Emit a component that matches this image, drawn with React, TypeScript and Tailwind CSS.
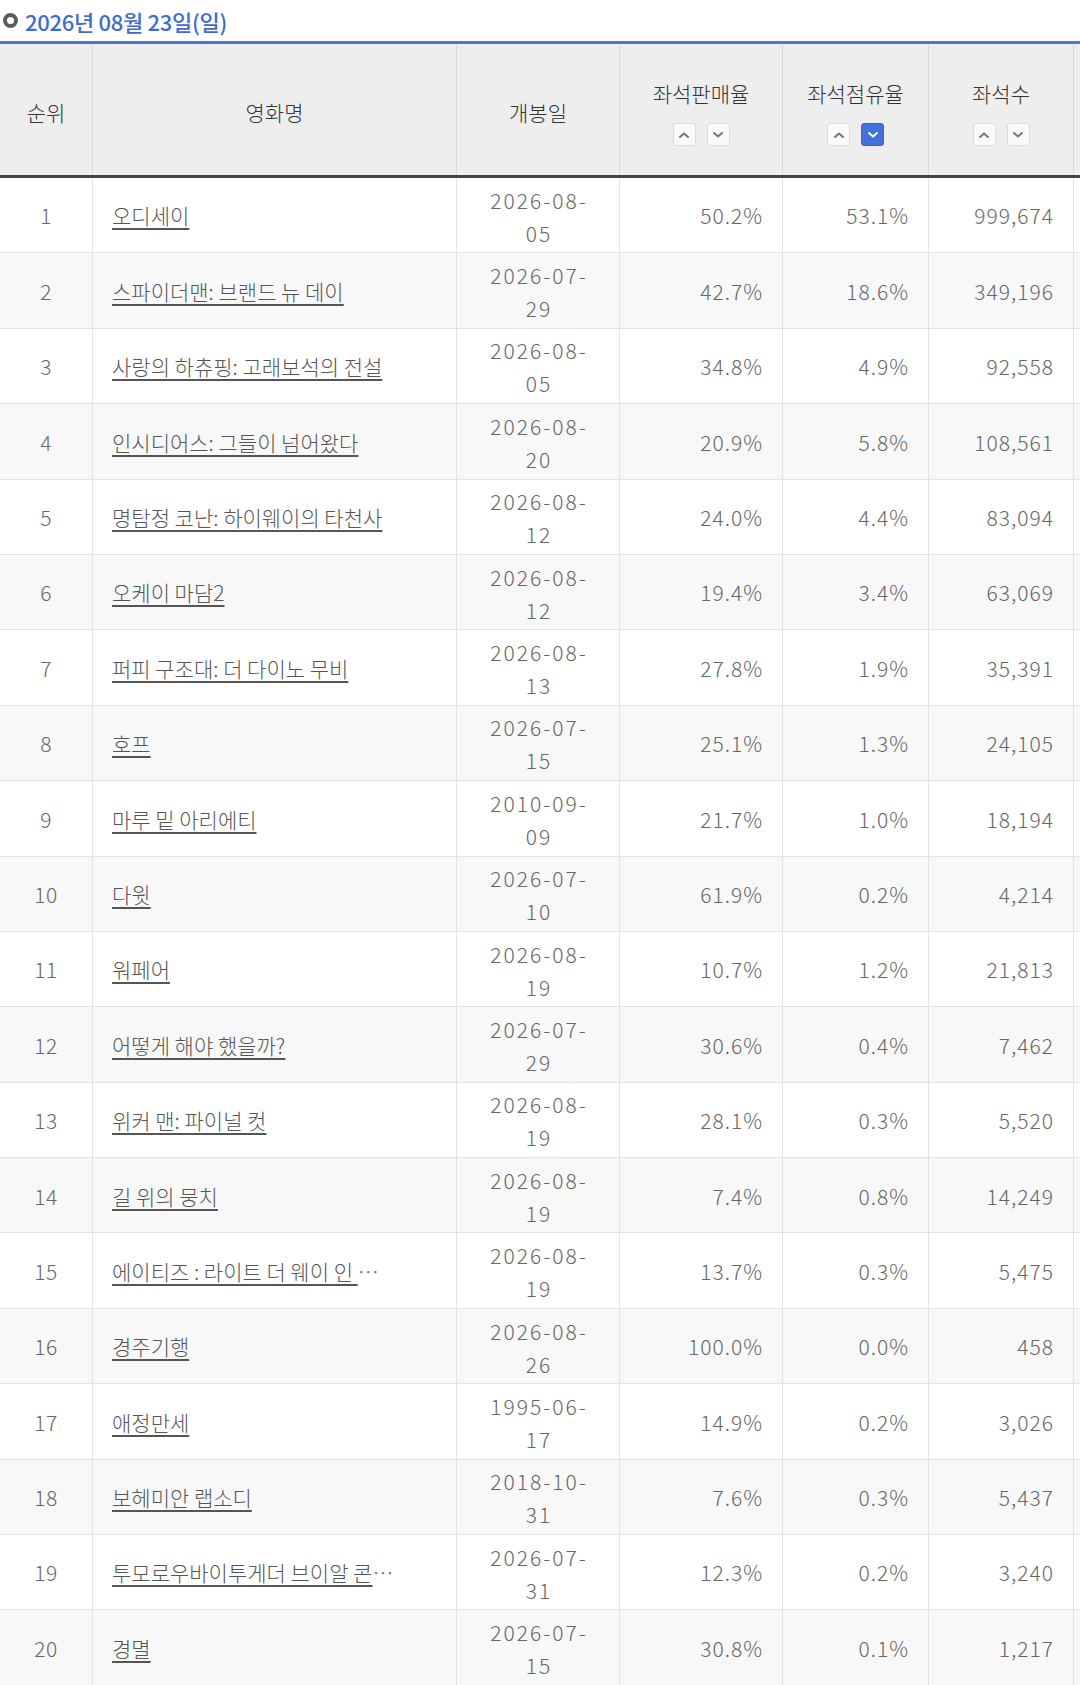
import React from "react";

type Movie = {
  rank: number;
  name: string;
  more?: string;
  date: string;
  sales: string;
  share: string;
  seats: string;
};

const MOVIES: Movie[] = [
  { rank: 1, name: "오디세이", date: "2026-08-05", sales: "50.2%", share: "53.1%", seats: "999,674" },
  { rank: 2, name: "스파이더맨: 브랜드 뉴 데이", date: "2026-07-29", sales: "42.7%", share: "18.6%", seats: "349,196" },
  { rank: 3, name: "사랑의 하츄핑: 고래보석의 전설", date: "2026-08-05", sales: "34.8%", share: "4.9%", seats: "92,558" },
  { rank: 4, name: "인시디어스: 그들이 넘어왔다", date: "2026-08-20", sales: "20.9%", share: "5.8%", seats: "108,561" },
  { rank: 5, name: "명탐정 코난: 하이웨이의 타천사", date: "2026-08-12", sales: "24.0%", share: "4.4%", seats: "83,094" },
  { rank: 6, name: "오케이 마담2", date: "2026-08-12", sales: "19.4%", share: "3.4%", seats: "63,069" },
  { rank: 7, name: "퍼피 구조대: 더 다이노 무비", date: "2026-08-13", sales: "27.8%", share: "1.9%", seats: "35,391" },
  { rank: 8, name: "호프", date: "2026-07-15", sales: "25.1%", share: "1.3%", seats: "24,105" },
  { rank: 9, name: "마루 밑 아리에티", date: "2010-09-09", sales: "21.7%", share: "1.0%", seats: "18,194" },
  { rank: 10, name: "다윗", date: "2026-07-10", sales: "61.9%", share: "0.2%", seats: "4,214" },
  { rank: 11, name: "워페어", date: "2026-08-19", sales: "10.7%", share: "1.2%", seats: "21,813" },
  { rank: 12, name: "어떻게 해야 했을까?", date: "2026-07-29", sales: "30.6%", share: "0.4%", seats: "7,462" },
  { rank: 13, name: "위커 맨: 파이널 컷", date: "2026-08-19", sales: "28.1%", share: "0.3%", seats: "5,520" },
  { rank: 14, name: "길 위의 뭉치", date: "2026-08-19", sales: "7.4%", share: "0.8%", seats: "14,249" },
  { rank: 15, name: "에이티즈 : 라이트 더 웨이 인\u00a0", more: " …", date: "2026-08-19", sales: "13.7%", share: "0.3%", seats: "5,475" },
  { rank: 16, name: "경주기행", date: "2026-08-26", sales: "100.0%", share: "0.0%", seats: "458" },
  { rank: 17, name: "애정만세", date: "1995-06-17", sales: "14.9%", share: "0.2%", seats: "3,026" },
  { rank: 18, name: "보헤미안 랩소디", date: "2018-10-31", sales: "7.6%", share: "0.3%", seats: "5,437" },
  { rank: 19, name: "투모로우바이투게더 브이알 콘", more: "…", date: "2026-07-31", sales: "12.3%", share: "0.2%", seats: "3,240" },
  { rank: 20, name: "경멸", date: "2026-07-15", sales: "30.8%", share: "0.1%", seats: "1,217" },
];

const Chevron = ({ up, color }: { up?: boolean; color: string }) => (
  <svg width="10" height="6" viewBox="0 0 10 6" fill="none">
    <path
      d={up ? "M1 5L5 1.5L9 5" : "M1 1L5 4.5L9 1"}
      stroke={color}
      strokeWidth="2"
      strokeLinecap="round"
      strokeLinejoin="round"
    />
  </svg>
);

const SortButtons = ({ active }: { active?: "up" | "down" }) => (
  <div className="mt-[14px] flex justify-center gap-[11px]">
    <span
      className={
        active === "up"
          ? "flex h-[23px] w-[23px] items-center justify-center rounded-[3px] border border-[#3a63cf] bg-[#4470dc]"
          : "flex h-[23px] w-[23px] items-center justify-center rounded-[3px] border border-[#dcdcdc] bg-[#fafafa]"
      }
    >
      <Chevron up color={active === "up" ? "#ffffff" : "#777777"} />
    </span>
    <span
      className={
        active === "down"
          ? "flex h-[23px] w-[23px] items-center justify-center rounded-[3px] border border-[#3a63cf] bg-[#4470dc]"
          : "flex h-[23px] w-[23px] items-center justify-center rounded-[3px] border border-[#dcdcdc] bg-[#fafafa]"
      }
    >
      <Chevron color={active === "down" ? "#ffffff" : "#777777"} />
    </span>
  </div>
);

const cols = "grid grid-cols-[93px_364px_163px_163px_146px_145px_100px]";

export default function App() {
  return (
    <div
      className="w-[1080px] overflow-hidden bg-white"
      style={{ fontFamily: '"Noto Sans CJK KR", "Noto Sans", sans-serif' }}
    >
      <div className="flex h-[41px] items-center gap-[7px] pl-[3px]">
        <span className="h-[15px] w-[15px] rounded-full border-[4px] border-[#5b5b5b] bg-white" />
        <span className="text-[22px] font-medium leading-none tracking-[-0.3px] text-[#3d6bd4]">
          2026년 08월 23일(일)
        </span>
      </div>

      <div className="w-[1180px] border-t-[3px] border-[#4a74d9]">
        <div className={`${cols} h-[134px] border-b-[3px] border-[#444444] bg-[#eeeeee] text-[21px] font-light text-[#333333]`}>
          <div className="flex items-center justify-center border-r border-[#d9d9d9] pt-[6px]">순위</div>
          <div className="flex items-center justify-center border-r border-[#d9d9d9] pt-[6px]">영화명</div>
          <div className="flex items-center justify-center border-r border-[#d9d9d9] pt-[6px]">개봉일</div>
          <div className="flex flex-col items-center justify-center border-r border-[#d9d9d9] pt-[5px]">
            <span>좌석판매율</span>
            <SortButtons />
          </div>
          <div className="flex flex-col items-center justify-center border-r border-[#d9d9d9] pt-[5px]">
            <span>좌석점유율</span>
            <SortButtons active="down" />
          </div>
          <div className="flex flex-col items-center justify-center border-r border-[#d9d9d9] pt-[5px]">
            <span>좌석수</span>
            <SortButtons />
          </div>
          <div className="border-r border-[#d9d9d9]" />
        </div>

        {MOVIES.map((m) => {
          const cut = m.date.lastIndexOf("-") + 1;
          return (
            <div
              key={m.rank}
              className={`${cols} h-[75.4px] border-b border-[#e2e2e2] text-[21px] font-light text-[#666666] ${
                m.rank % 2 === 0 ? "bg-[#f8f8f8]" : "bg-white"
              }`}
            >
              <div className="flex items-center justify-center border-r border-[#e2e2e2] pt-[2px] tracking-[0.5px]">
                {m.rank}
              </div>
              <div className="flex items-center overflow-hidden whitespace-nowrap border-r border-[#e2e2e2] pl-[19px] pt-[2px]">
                <span className="text-[#555555] underline decoration-[1.5px] underline-offset-[4px]">{m.name}</span>
                {m.more && <span className="text-[#777777]">{m.more}</span>}
              </div>
              <div className="flex flex-col items-center justify-center border-r border-[#e2e2e2] pl-[2px] pt-[3px] leading-[33px] tracking-[2px]">
                <span>{m.date.slice(0, cut)}</span>
                <span>{m.date.slice(cut)}</span>
              </div>
              <div className="flex items-center justify-end border-r border-[#e2e2e2] pr-[19px] pt-[2px] tracking-[1px]">
                {m.sales}
              </div>
              <div className="flex items-center justify-end border-r border-[#e2e2e2] pr-[19px] pt-[2px] tracking-[1px]">
                {m.share}
              </div>
              <div className="flex items-center justify-end border-r border-[#e2e2e2] pr-[19px] pt-[2px] tracking-[1px]">
                {m.seats}
              </div>
              <div className="border-r border-[#e2e2e2]" />
            </div>
          );
        })}
      </div>
    </div>
  );
}
